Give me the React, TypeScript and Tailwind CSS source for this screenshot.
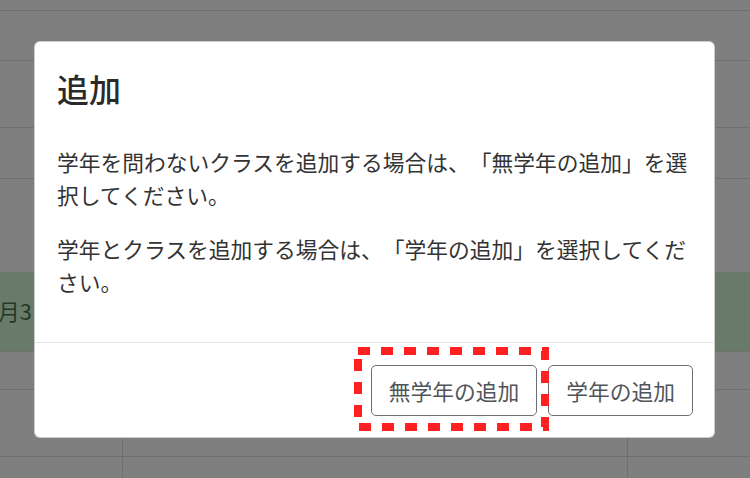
import React from 'react';

const jp = '"Noto Sans CJK JP", "Noto Sans", sans-serif';

function BackdropRow({ h, line = true, cells = false, green = false, children }: {
    h: string;
    line?: boolean;
    cells?: boolean;
    green?: boolean;
    children?: React.ReactNode;
}) {
    return (
        <div
            className={`${h} shrink-0 ${line ? 'border-b border-[#6f6f6f]' : ''} ${green ? 'bg-[#697a6b]' : ''} ${cells ? 'grid grid-cols-[122px_505px_1fr]' : 'flex items-center'}`}
        >
            {cells ? (
                <>
                    <div />
                    <div className="border-l border-[#6f6f6f]" />
                    <div className="border-l border-[#6f6f6f]" />
                </>
            ) : children}
        </div>
    );
}

export default function App() {
    return (
        <div className="relative w-[750px] h-[478px] overflow-hidden bg-[#7f7f7f] flex flex-col [text-spacing-trim:space-all]" style={{ fontFamily: jp }}>
            {/* dimmed table behind the dialog */}
            <BackdropRow h="h-[11px]" />
            <BackdropRow h="h-[50px]" />
            <BackdropRow h="h-[67px]" />
            <BackdropRow h="h-[51px]" />
            <BackdropRow h="h-[93px]" line={false} />
            <BackdropRow h="h-[80px]" green>
                <span className="ml-[-2px] text-[21.75px] text-[#1f3b25]">月3</span>
            </BackdropRow>
            <BackdropRow h="h-[38px]" cells />
            <BackdropRow h="h-[67px]" cells />
            <BackdropRow h="h-[40px]" cells line={false} />

            {/* dialog */}
            <div className="absolute left-[34px] top-[41px] w-[681px] bg-white rounded-[6px] border border-black/20 text-[#333] flex flex-col">
                <div className="px-[22px] pt-[22px]">
                    <h4 className="text-[32px] leading-[48px] font-medium text-[#2a2a2a]">追加</h4>
                </div>
                <div className="px-[22px] pt-[34px] pb-[22px] text-[21.75px] leading-[32.6px]">
                    <p className="mb-[22px]">学年を問わないクラスを追加する場合は、「無学年の追加」を選択してください。</p>
                    <p className="mb-[22px]">学年とクラスを追加する場合は、「学年の追加」を選択してください。</p>
                </div>
                <div className="border-t border-[#e3e6e9] flex justify-end items-center gap-[11px] pr-[21px] pt-[22px] pb-[21px]">
                    <button className="h-[51px] px-[17px] rounded-[5px] border border-[#6c7075] text-[21.75px] leading-[32.6px] text-[#50555a]">
                        無学年の追加
                    </button>
                    <button className="h-[51px] px-[17px] rounded-[5px] border border-[#6c7075] text-[21.75px] leading-[32.6px] text-[#50555a]">
                        学年の追加
                    </button>
                </div>
            </div>

            {/* red dashed highlight annotation */}
            <svg className="absolute left-[354px] top-[347px]" width="195" height="84" viewBox="0 0 195 84">
                <rect x="4" y="4" width="187" height="76" fill="none" stroke="#ff2121" strokeWidth="8" strokeDasharray="12 11" />
            </svg>
        </div>
    );
}
